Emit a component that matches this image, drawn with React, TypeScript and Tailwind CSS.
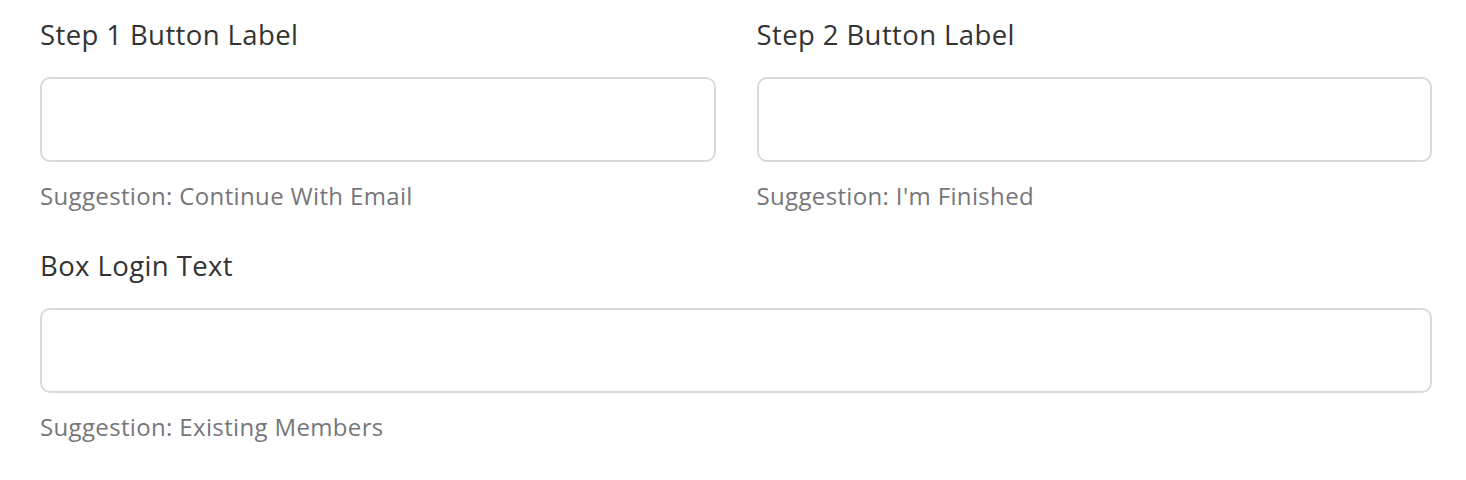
const fields = [
  { label: "Step 1 Button Label", hint: "Suggestion: Continue With Email" },
  { label: "Step 2 Button Label", hint: "Suggestion: I'm Finished" },
];

function Field({ label, hint }: { label: string; hint: string }) {
  return (
    <div className="flex flex-col">
      <label className="text-[27.5px] leading-[34px] tracking-[0.4px] text-[#333333]">{label}</label>
      <input
        type="text"
        className="mt-[25px] h-[85px] w-full rounded-[10px] border-2 border-[#dadada] bg-white px-4 outline-none"
      />
      <p className="mt-[20px] text-[24px] leading-[28px] tracking-[0.35px] text-[#76767a]">{hint}</p>
    </div>
  );
}

export default function App() {
  return (
    <div className="min-h-[480px] bg-white pl-[40px] pr-[34px] pt-[18px] font-['Open_Sans',sans-serif]">
      <div className="grid grid-cols-2 gap-x-[41px]">
        {fields.map((f) => (
          <Field key={f.label} label={f.label} hint={f.hint} />
        ))}
      </div>
      <div className="mt-[39px]">
        <Field label="Box Login Text" hint="Suggestion: Existing Members" />
      </div>
    </div>
  );
}
